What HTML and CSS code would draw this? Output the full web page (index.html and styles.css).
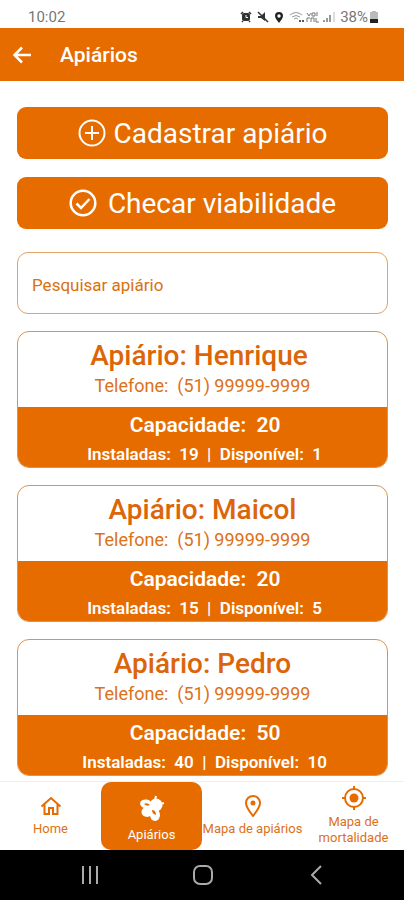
FILE: index.html
```html
<!DOCTYPE html>
<html lang="pt-BR">
<head>
<meta charset="UTF-8">
<meta name="viewport" content="width=device-width, initial-scale=1.0">
<title>Apiários</title>
<link rel="stylesheet" href="styles.css">
</head>
<body>
  <div class="status-bar">
    <span class="time">10:02</span>
    <div class="status-icons">
      <svg width="12" height="12" viewBox="0 0 12 12"><path d="M1 3l2-2M11 3L9 1M2 11l1-1M10 11l-1-1" stroke="#333" stroke-width="1.5"/><rect x="2" y="2" width="8" height="8" rx="2" fill="#333"/><path d="M6 4v2.500h2" stroke="#fff" fill="none"/></svg>
      <svg width="12" height="12" viewBox="0 0 12 12"><path d="M1 5h3l4-4v9L4 7H1z" fill="#333"/><path d="M1 1l10 10" stroke="#333" stroke-width="1.500"/></svg>
      <svg width="10" height="12" viewBox="0 0 10 12"><path d="M5 12C3 9 1 7 1 5a4 4 0 0 1 8 0c0 2-2 4-4 7z" fill="#222"/><circle cx="5" cy="5" r="1.700" fill="#fff"/></svg>
      <svg width="46" height="12" viewBox="0 0 46 12" fill="none" stroke="#999"><path d="M1 4q6-5 12 0M3 6q4-3 8 0M5 8q2-2 4 0"/><path d="M10 10h2M14 9v2" stroke="#555" stroke-width="2"/><path d="M18 2l2 3 2-3M23 2h3v3h-3zM28 1v4M18 11V7h3M22 11V7h3v4M27 7v4h3" stroke="#777"/><path d="M35 9v2M38 7v4M41 4v7" stroke-width="2"/><path d="M45 1v10" stroke="#bbb"/></svg>
      <span>38%</span>
      <svg width="8" height="12" viewBox="0 0 8 12"><path d="M2 0h4v1h2v11H0V1h2z" fill="#bbb"/><path d="M0 8h8v4H0z" fill="#222"/></svg>
    </div>
  </div>

  <header class="header">
    <button class="back" aria-label="Voltar">
      <svg width="20" height="20" viewBox="0 0 20 20" fill="none" stroke="#fff" stroke-width="2.500"><path d="M19 10H3M10 2.500L2.500 10l7.500 7.500"/></svg>
    </button>
    <h1>Apiários</h1>
  </header>

  <main class="content">
    <button class="action">
      <svg width="28" height="28" viewBox="0 0 28 28" fill="none" stroke="#fff" stroke-width="2"><circle cx="14" cy="14" r="12.500"/><path d="M14 7v14M7 14h14"/></svg>
      Cadastrar apiário
    </button>
    <button class="action action-check">
      <svg width="28" height="28" viewBox="0 0 28 28" fill="none" stroke="#fff" stroke-width="2.500"><circle cx="14" cy="14" r="12.300"/><path d="M7.500 14.500l4.500 4.500 8.500-9"/></svg>
      Checar viabilidade
    </button>

    <input class="search" type="text" placeholder="Pesquisar apiário" aria-label="Pesquisar apiário">

    <section class="card">
      <div class="card-top">
        <h2>Apiário: Henrique&nbsp;</h2>
        <p>Telefone:&nbsp; (51) 99999-9999</p>
      </div>
      <div class="card-bottom">
        <p class="capacity">&nbsp;Capacidade:&nbsp; 20</p>
        <p class="detail">&nbsp;Instaladas:&nbsp; 19&nbsp; |&nbsp; Disponível:&nbsp; 1</p>
      </div>
    </section>

    <section class="card">
      <div class="card-top">
        <h2>Apiário: Maicol</h2>
        <p>Telefone:&nbsp; (51) 99999-9999</p>
      </div>
      <div class="card-bottom">
        <p class="capacity">&nbsp;Capacidade:&nbsp; 20</p>
        <p class="detail">&nbsp;Instaladas:&nbsp; 15&nbsp; |&nbsp; Disponível:&nbsp; 5</p>
      </div>
    </section>

    <section class="card">
      <div class="card-top">
        <h2>Apiário: Pedro</h2>
        <p>Telefone:&nbsp; (51) 99999-9999</p>
      </div>
      <div class="card-bottom">
        <p class="capacity">&nbsp;Capacidade:&nbsp; 50</p>
        <p class="detail">&nbsp;Instaladas:&nbsp; 40&nbsp; |&nbsp; Disponível:&nbsp; 10</p>
      </div>
    </section>
  </main>

  <nav class="tabs">
    <a href="#home" class="tab">
      <svg width="22" height="22" viewBox="0 0 22 22" fill="none" stroke="#e66c00" stroke-width="2"><path d="M1.500 11.500L11 3l9.500 8.500M4.500 9.500V19H9v-6h4v6h4.500V9.500"/></svg>
      <span>Home</span>
    </a>
    <a href="#apiarios" class="tab active">
      <svg width="28" height="28" viewBox="0 0 28 28">
        <g fill="#fff"><ellipse cx="8" cy="9" rx="6" ry="4.500" transform="rotate(12 8 9)"/><ellipse cx="9" cy="17" rx="5.500" ry="5"/><ellipse cx="17" cy="20" rx="5" ry="6"/><circle cx="18" cy="10" r="6.500"/><rect x="8" y="9" width="13" height="10" rx="4"/></g>
        <path d="M17 5l1-4M22 9l4-1" stroke="#fff" stroke-width="2"/>
        <path d="M6 9q3-2 6 1-3 2-6-1zM14 15q4 0 4 5-4-1-4-5z" fill="#e66c00"/>
      </svg>
      <span>Apiários</span>
    </a>
    <a href="#mapa" class="tab">
      <svg width="22" height="22" viewBox="0 0 22 22" fill="none" stroke="#e66c00" stroke-width="2"><path d="M11 21C7 16 4 12 4 8a7 7 0 0 1 14 0c0 4-3 8-7 13z"/><circle cx="11" cy="8" r="2.500" fill="#e66c00" stroke="none"/></svg>
      <span>Mapa de apiários</span>
    </a>
    <a href="#mortalidade" class="tab">
      <svg width="24" height="24" viewBox="0 0 24 24" fill="none" stroke="#e66c00" stroke-width="2"><circle cx="12" cy="12" r="9"/><circle cx="12" cy="12" r="4.500" fill="#e66c00" stroke="none"/><path d="M12 0v4M12 20v4M0 12h4M20 12h4"/></svg>
      <span>Mapa de mortalidade</span>
    </a>
  </nav>

  <div class="system-nav">
    <button aria-label="Recentes"><svg width="20" height="20" viewBox="0 0 20 20" stroke="#aaa" stroke-width="2"><path d="M3 1v18M10 1v18M17 1v18"/></svg></button>
    <button aria-label="Início"><svg width="20" height="20" viewBox="0 0 20 20" fill="none" stroke="#aaa" stroke-width="2"><rect x="1" y="1" width="18" height="18" rx="6"/></svg></button>
    <button aria-label="Voltar ao anterior"><svg width="20" height="20" viewBox="0 0 20 20" fill="none" stroke="#aaa" stroke-width="2"><path d="M15 1l-9 9 9 9"/></svg></button>
  </div>
</body>
</html>
```
FILE: styles.css
```css
* {
  box-sizing: border-box;
}
body {
  margin: 0;
  height: 100vh;
  display: flex;
  flex-direction: column;
  background: #fff;
  font-family: Roboto, sans-serif;
}
h1, h2, p {
  margin: 0;
}
button {
  border: none;
  padding: 0;
  font-family: inherit;
  cursor: pointer;
}
svg {
  display: block;
  flex-shrink: 0;
}
.status-bar {
  height: 28px;
  padding: 6px 26px 0 28px;
  display: flex;
  align-items: center;
  justify-content: space-between;
  font-size: 15px;
  color: #777;
}
.status-icons {
  display: flex;
  align-items: center;
  gap: 5px;
}
.status-icons span {
  margin-right: -3px;
}
.header {
  height: 53px;
  padding: 0 12px;
  display: flex;
  align-items: center;
  gap: 28px;
  background: #e66c00;
  color: #fff;
}
.back {
  background: none;
}
.header h1 {
  font-size: 21px;
  font-weight: 500;
}
.content {
  flex: 1;
  min-height: 0;
  overflow: auto;
  padding: 26px 16px 0 17px;
  display: flex;
  flex-direction: column;
  scrollbar-width: none;
}
.action {
  flex-shrink: 0;
  height: 52px;
  margin-bottom: 18px;
  display: flex;
  align-items: center;
  justify-content: center;
  gap: 8px;
  border-radius: 9px;
  background: #e66c00;
  color: #fff;
  font-size: 28px;
}
.action-check {
  gap: 11px;
}
.search {
  flex-shrink: 0;
  width: 100%;
  height: 62px;
  margin: 5px 0 17px;
  padding: 4px 14px 0;
  border: 1px solid #dfa468;
  border-radius: 11px;
  font-family: inherit;
  font-size: 17px;
  color: #d9710f;
}
.search::placeholder {
  color: #d9710f;
}
.card {
  flex-shrink: 0;
  margin-bottom: 17px;
  border: 1px solid #e0924a;
  border-radius: 12px;
  overflow: hidden;
  text-align: center;
}
.card:last-child {
  margin-bottom: 4px;
}
.card-top {
  height: 75px;
  padding-top: 8px;
  color: #dc7118;
}
.card-top h2 {
  font-size: 28px;
  line-height: 32px;
  font-weight: 500;
  color: #dc6509;
}
.card-top p {
  font-size: 18px;
  line-height: 28px;
}
.card-bottom {
  height: 60px;
  padding-top: 3px;
  background: #e66c00;
  color: #fff;
  font-weight: 600;
}
.capacity {
  font-size: 21px;
  line-height: 31px;
}
.detail {
  font-size: 17px;
  line-height: 27px;
}
.tabs {
  height: 69px;
  display: grid;
  grid-template-columns: repeat(4, 1fr);
  border-top: 1px solid #eee;
}
.tab {
  display: flex;
  flex-direction: column;
  align-items: center;
  justify-content: center;
  gap: 4px;
  color: #dc7118;
  font-size: 13px;
  line-height: 16px;
  text-align: center;
  text-decoration: none;
}
.active {
  padding-top: 5px;
  border-radius: 10px;
  background: #e66c00;
  color: #fff;
}
.system-nav {
  height: 50px;
  padding: 0 32px 0 34px;
  display: grid;
  grid-template-columns: repeat(3, 1fr);
  background: #000;
}
.system-nav button {
  display: flex;
  align-items: center;
  justify-content: center;
  background: none;
}
```
